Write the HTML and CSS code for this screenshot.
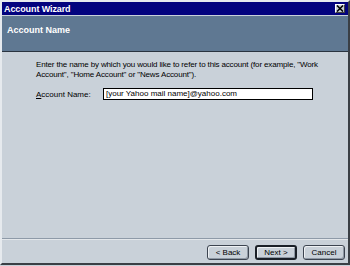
FILE: index.html
```html
<!DOCTYPE html>
<html>
<head>
<meta charset="utf-8">
<link rel="stylesheet" href="styles.css">
</head>
<body>
<div class="window">
  <div class="titlebar">
    <span class="title">Account Wizard</span>
    <span class="close"><svg width="8" height="7" viewBox="0 0 8 7"><path d="M1 0.5 L7 6.5 M7 0.5 L1 6.5" stroke="#000" stroke-width="1.6"/></svg></span>
  </div>
  <div class="header">Account Name</div>
  <div class="content">
    <p class="intro">Enter the name by which you would like to refer to this account (for example, "Work Account", "Home Account" or "News Account").</p>
    <div class="row">
      <label class="label"><u>A</u>ccount Name:</label>
      <div class="input">[your Yahoo mail name]@yahoo.com</div>
    </div>
  </div>
  <div class="footer">
    <span class="btn">&lt; Back</span>
    <span class="btn default">Next &gt;</span>
    <span class="btn">Cancel</span>
  </div>
</div>
</body>
</html>
```

FILE: styles.css
```css
html, body {
  margin: 0;
  padding: 0;
}
body {
  width: 350px;
  height: 266px;
  font-family: "Liberation Sans", Arial, sans-serif;
  font-size: 8px;
  color: #000;
  background: #c9d1d9;
}
.window {
  box-sizing: border-box;
  width: 350px;
  height: 265px;
  border-style: solid;
  border-width: 2px;
  border-color: #e6eaee #3a3f45 #3a3f45 #e6eaee;
  background: #c9d1d9;
  display: flex;
  flex-direction: column;
}
.titlebar {
  height: 13px;
  background: #03037e;
  display: flex;
  align-items: center;
  justify-content: space-between;
  padding: 0 3px 0 2px;
  margin-bottom: 1px;
}
.title {
  color: #fff;
  font-weight: bold;
  font-size: 9px;
  letter-spacing: -0.1px;
}
.close {
  width: 10px;
  height: 9px;
  box-sizing: border-box;
  background: #c9d1d9;
  border: 1px solid;
  border-color: #fff #404040 #404040 #fff;
  display: flex;
  align-items: center;
  justify-content: center;
}
.header {
  height: 36px;
  background: #5f7892;
  border-bottom: 1px solid #2a3440;
  color: #fff;
  font-weight: bold;
  font-size: 9px;
  padding: 9px 0 0 5px;
  box-sizing: border-box;
}
.content {
  flex: 1;
  padding: 8px 0 0 34px;
  border-bottom: 1px solid #8e9aa8;
}
.intro {
  margin: 0;
  line-height: 10px;
  width: 300px;
  letter-spacing: -0.15px;
}
.row {
  display: flex;
  align-items: center;
  margin-top: 8px;
}
.label {
  width: 67px;
}
.input {
  box-sizing: border-box;
  width: 210px;
  height: 12px;
  background: #fff;
  border: 1px solid #000;
  padding: 0 2px;
  line-height: 10px;
}
.footer {
  height: 24px;
  border-top: 1px solid #e3e7eb;
  display: flex;
  justify-content: flex-end;
  align-items: flex-start;
  gap: 6px;
  padding: 5px 3px 0 0;
  box-sizing: border-box;
}
.btn {
  box-sizing: border-box;
  width: 42px;
  height: 15px;
  border: 1px solid #3c4450;
  border-radius: 3px;
  background: #c9d1d9;
  box-shadow: inset 1px 1px 0 #eef1f4, inset -1px -1px 0 #8e98a4;
  display: flex;
  align-items: center;
  justify-content: center;
}
.btn.default {
  border-width: 2px;
  border-color: #1a2028;
}
```
